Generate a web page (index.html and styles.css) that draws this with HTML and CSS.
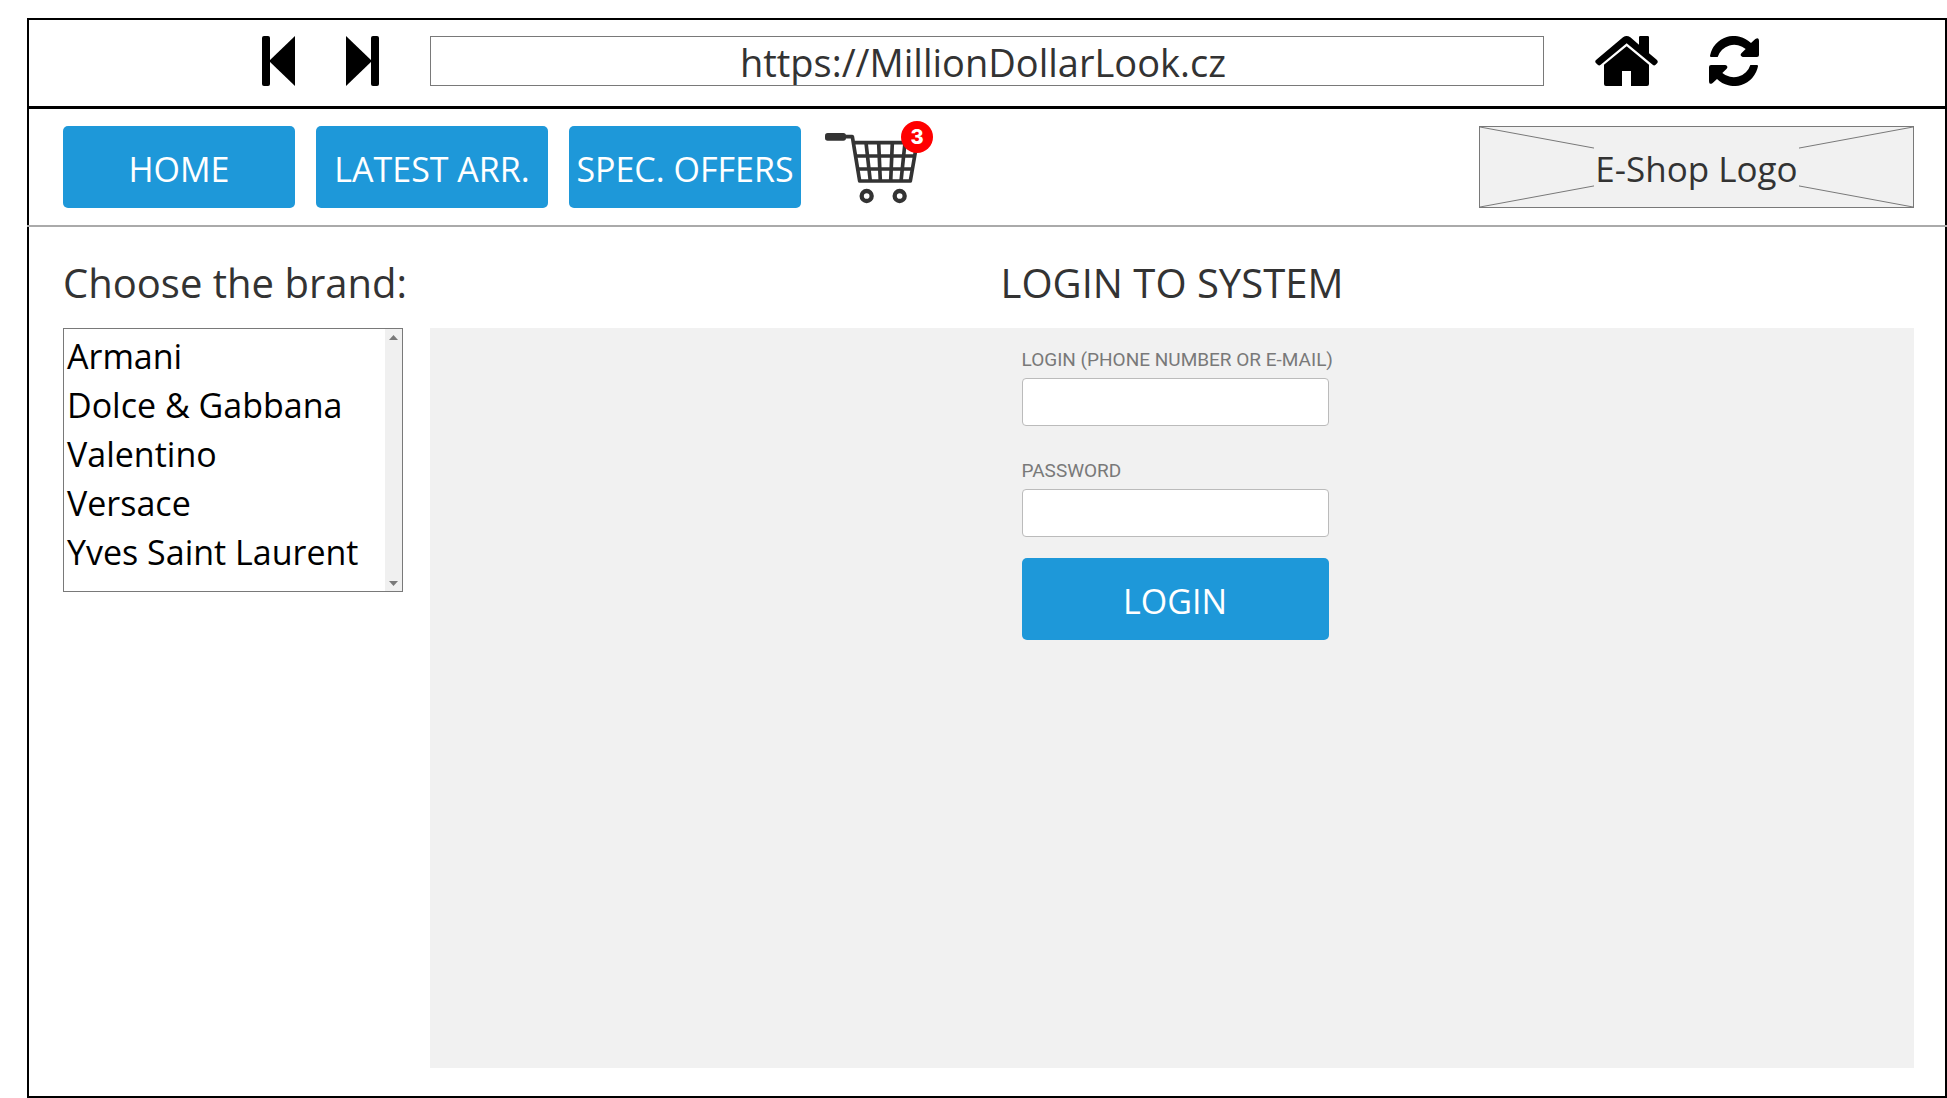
FILE: index.html
```html
<!DOCTYPE html>
<html lang="en">
<head>
<meta charset="utf-8">
<meta name="viewport" content="width=device-width, initial-scale=1">
<title>MillionDollarLook</title>
<link rel="stylesheet" href="styles.css">
</head>
<body>
<div class="frame">
  <div class="toolbar">
    <button class="tool" type="button" aria-label="Back">
      <svg width="33" height="50" viewBox="0 0 33 50"><rect width="8" height="50" rx="2"/><path d="M33 0V50L7 25Z"/></svg>
    </button>
    <button class="tool" type="button" aria-label="Forward">
      <svg width="33" height="50" viewBox="0 0 33 50"><rect x="25" width="8" height="50" rx="2"/><path d="M0 0V50L26 25Z"/></svg>
    </button>
    <input class="url" type="text" aria-label="Address" value="https://MillionDollarLook.cz">
    <button class="tool" type="button" aria-label="Start page">
      <svg width="63" height="50" viewBox="0 0 189 150"><path d="M84 4Q95-4 106 4L132 26V4Q132 0 136 0H158Q162 0 162 4V52L186 72Q190 77 187 81L181 87Q177 90 173 86L95 22L17 86Q13 90 9 87L2 80Q-1 76 3 72Z"/><path d="M95 31L162 86V144Q162 150 156 150H108V105H81V150H33Q27 150 27 144V86Z"/></svg>
    </button>
    <button class="tool" type="button" aria-label="Reload">
      <svg width="50" height="50" viewBox="0 0 150 150"><path id="arc" d="M3 59A73 73 0 0 1 126 21L139 9Q150 2 150 14V57Q150 63 144 63H101Q91 60 97 52L110 39A52 52 0 0 0 26 63H6Q3 63 3 59Z"/><use href="#arc" transform="rotate(180 75 75)"/></svg>
    </button>
  </div>

  <header class="header">
    <nav class="nav">
      <button class="btn" type="button">HOME</button>
      <button class="btn" type="button">LATEST ARR.</button>
      <button class="btn" type="button">SPEC. OFFERS</button>
      <a class="cart" href="#" aria-label="Shopping cart">
        <svg width="111" height="82" viewBox="36 48 333 246">
          <rect x="45" y="69" width="63" height="23" rx="8" fill="#333"/>
          <g fill="none" stroke="#333" stroke-width="11" stroke-linejoin="round">
            <path d="M106 80H127L149 213H301L321 98H131"/>
            <path d="M137 138H315M143 177H308M168 98L181 214M206 98L211 214M247 98L242 214M285 98L273 214"/>
          </g>
          <g fill="none" stroke="#333" stroke-width="13"><circle cx="170" cy="258" r="15"/><circle cx="269" cy="258" r="15"/></g>
        </svg>
        <span class="badge">3</span>
      </a>
    </nav>
    <div class="logo">
      <svg class="logo-lines" viewBox="0 0 100 100" preserveAspectRatio="none"><path d="M0 0L100 100M100 0L0 100"/></svg>
      <span class="logo-text">E-Shop Logo</span>
    </div>
  </header>

  <main class="main">
    <aside class="brands">
      <h2 class="title"><label for="brand">Choose the brand:</label></h2>
      <div class="list">
        <select class="options" id="brand" size="5">
          <option>Armani</option>
          <option>Dolce &amp; Gabbana</option>
          <option>Valentino</option>
          <option>Versace</option>
          <option>Yves Saint Laurent</option>
        </select>
        <div class="scroll">
          <svg width="9" height="5" viewBox="0 0 18 10"><path d="M0 10L9 0L18 10Z"/></svg>
          <svg width="9" height="5" viewBox="0 0 18 10"><path d="M0 0H18L9 10Z"/></svg>
        </div>
      </div>
    </aside>
    <section class="content">
      <h1 class="title title-center">LOGIN TO SYSTEM</h1>
      <div class="panel">
        <form class="form">
          <div class="field">
            <label class="label" for="login">LOGIN (PHONE NUMBER OR E-MAIL)</label>
            <input class="input" id="login" type="text">
          </div>
          <div class="field">
            <label class="label" for="password">PASSWORD</label>
            <input class="input" id="password" type="password">
          </div>
          <button class="btn btn-login" type="submit">LOGIN</button>
        </form>
      </div>
    </section>
  </main>
</div>
</body>
</html>
```
FILE: styles.css
```css
* {
  box-sizing: border-box;
}

body {
  margin: 0;
  padding: 18px 0 0 27px;
  background: #fff;
  color: #333;
  font-family: "Open Sans", "Noto Sans", sans-serif;
  font-size: 34px;
}

button,
input,
select {
  font-family: inherit;
  font-size: inherit;
}

svg {
  display: block;
}

.frame {
  display: flex;
  flex-direction: column;
  min-height: calc(100vh - 18px);
  border: 2px solid #000;
}

.toolbar {
  display: flex;
  gap: 51px;
  padding: 16px 186px 20px 233px;
  border-bottom: 3px solid #000;
}

.tool {
  padding: 0;
  border: 0;
  background: none;
  color: #000;
}

.url {
  flex: 1;
  min-width: 0;
  height: 50px;
  padding: 2px 8px 0 0;
  border: 1px solid #797979;
  border-radius: 0;
  background: #fff;
  color: #333;
  font-size: 38px;
  text-align: center;
}

.header {
  display: flex;
  justify-content: space-between;
  margin: 0 -2px;
  padding: 17px 33px 17px 36px;
  border-bottom: 2px solid #aaa;
}

.nav {
  display: flex;
  gap: 21px;
}

.btn {
  width: 232px;
  height: 82px;
  padding: 4px 0 0;
  border: 0;
  border-radius: 5px;
  background: #1e98d9;
  color: #fff;
  white-space: nowrap;
}

.cart {
  position: relative;
  text-decoration: none;
}

.cart svg {
  overflow: visible;
}

.badge {
  position: absolute;
  top: -5px;
  right: 0;
  width: 32px;
  height: 32px;
  border-radius: 50%;
  background: #f00;
  color: #fff;
  font: 800 20px/32px Inter, sans-serif;
  text-align: center;
}

.logo {
  display: flex;
  justify-content: center;
  position: relative;
  width: 435px;
  height: 82px;
  border: 1px solid #797979;
  background: #f1f1f1;
}

.logo-lines {
  position: absolute;
  inset: 0;
  width: 100%;
  height: 100%;
}

.logo-lines path {
  stroke: #797979;
  stroke-width: 1px;
  vector-effect: non-scaling-stroke;
}

.logo-text {
  position: relative;
  padding: 4px 1px 0;
  background: #f1f1f1;
  font-size: 35px;
  line-height: 76px;
}

.main {
  display: flex;
  flex: 1;
  gap: 27px;
  padding: 29px 31px 28px 34px;
}

.brands {
  display: flex;
  flex-direction: column;
  gap: 18px;
  width: 340px;
}

.content {
  display: flex;
  flex: 1;
  flex-direction: column;
  gap: 18px;
}

.title {
  margin: 0;
  font-size: 40px;
  font-weight: 400;
  line-height: 54px;
  white-space: nowrap;
}

.title-center {
  text-align: center;
}

.list {
  display: flex;
  height: 264px;
  border: 1px solid #797979;
}

.options {
  flex: 1;
  min-width: 0;
  padding: 4px 0 0 2px;
  border: 0;
  outline: 0;
  background: #fff;
  color: #000;
  overflow: hidden;
}

.options option {
  height: 49px;
  padding: 0 1px;
  line-height: 49px;
}

.scroll {
  display: flex;
  flex-direction: column;
  align-items: center;
  justify-content: space-between;
  width: 17px;
  padding: 6px 0 5px;
  background: #f0f0f0;
  fill: #797979;
}

.panel {
  flex: 1;
  padding: 20px 0 20px 6px;
  background: #f1f1f1;
}

.form {
  display: flex;
  flex-direction: column;
  gap: 33px;
  width: 307px;
  margin: 0 auto;
}

.field {
  display: flex;
  flex-direction: column;
  gap: 6px;
}

.label {
  color: #797979;
  font: 400 19px/24px Roboto, sans-serif;
  white-space: nowrap;
}

.input {
  width: 100%;
  height: 48px;
  padding: 0 12px;
  border: 1px solid #bbb;
  border-radius: 4px;
  background: #fff;
  color: #333;
  font-size: 20px;
}

.btn-login {
  width: 100%;
  margin-top: -12px;
}
```
